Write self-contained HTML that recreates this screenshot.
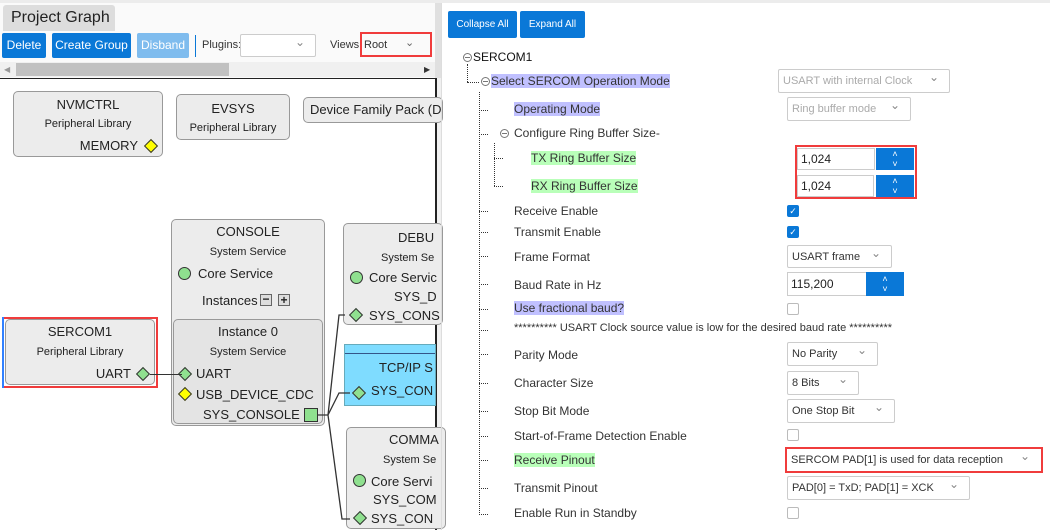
<!DOCTYPE html>
<html><head><meta charset="utf-8"><style>
*{margin:0;padding:0;box-sizing:border-box}
body{width:1050px;height:530px;overflow:hidden;background:#fff;font-family:"Liberation Sans",sans-serif;position:relative;color:#222}
.a{position:absolute}
.btn{position:absolute;background:#0a78d7;color:#fff;font-size:12px;text-align:center;border-radius:2px}
.node{position:absolute;background:#ececec;border:1px solid #999;border-radius:5px;font-size:13px;text-align:center}
.sub{font-size:11px}
.dia{position:absolute;width:10px;height:10px;transform:rotate(45deg);border:1px solid #333}
.circ{position:absolute;width:13px;height:13px;border-radius:50%;background:#8fe08f;border:1px solid #333}
.lbl{position:absolute;font-size:12px;color:#333;white-space:nowrap}
.sel{position:absolute;border:1px solid #ccc;border-radius:2px;font-size:11px;color:#333;padding:5px 0 0 4px;background:#fff;white-space:nowrap}
.sel:after{content:"⌄";position:absolute;right:10px;top:0px;color:#888;font-size:12px}
.dis{color:#aaa}
.vd{position:absolute;border-left:1px dotted #333;width:0}
.hd{position:absolute;border-top:1px dotted #333;height:0;width:9px}
.cb{position:absolute;width:12px;height:12px;border:1px solid #bbb;border-radius:2px;background:#fff}
.cbc{background:#0a78d7;border-color:#0a78d7;color:#fff;font-size:9px;line-height:11px;text-align:center}
.spin{position:absolute;background:#0a78d7;color:#fff;font-size:9px;text-align:center;line-height:10px;padding-top:1px}
.hp{background:#c0c0ff}.hg{background:#b9ffb9}
.red{position:absolute;border:2px solid #f03c3c}
.mc{position:absolute;width:9px;height:9px;border:1px solid #777;border-radius:50%}
.mc:after{content:"";position:absolute;left:1px;top:3px;width:5px;height:1px;background:#777}
</style></head><body>
<div class="a" style="left:0;top:0;width:1050px;height:3px;background:#ececec"></div>
<div class="a" style="left:0;top:3px;width:435px;height:75px;background:#fafafa"></div>
<div class="a" style="left:3px;top:5px;width:112px;height:26px;background:#ddd;border-radius:3px 3px 0 0;font-size:16px;padding:4px 0 0 8px;color:#222">Project Graph</div>
<div class="btn" style="left:2px;top:33px;width:44px;height:25px;line-height:25px">Delete</div>
<div class="btn" style="left:52px;top:33px;width:79px;height:25px;line-height:25px">Create Group</div>
<div class="btn" style="left:137px;top:33px;width:52px;height:25px;line-height:25px;background:#7fbcee">Disband</div>
<div class="a" style="left:195px;top:35px;width:1px;height:22px;background:#0a78d7"></div>
<div class="lbl" style="left:202px;top:39px;font-size:11px">Plugins:</div>
<div class="sel" style="left:240px;top:34px;width:76px;height:23px"></div>
<div class="lbl" style="left:330px;top:39px;font-size:11px">Views:</div>
<div class="lbl" style="left:364px;top:39px;font-size:11px">Root</div>
<div class="a" style="left:405px;top:36px;font-size:11px;color:#666">⌄</div>
<div class="red" style="left:360px;top:32px;width:72px;height:25px"></div>
<div class="a" style="left:0;top:62px;width:435px;height:15px;background:#f0f0f0"></div>
<div class="a" style="left:16px;top:63px;width:213px;height:13px;background:#c1c1c1"></div>
<div class="a" style="left:4px;top:65px;font-size:8px;color:#999">◀</div>
<div class="a" style="left:424px;top:65px;font-size:8px;color:#333">▶</div>
<div class="a" style="left:0;top:78px;width:436px;height:1px;background:#222"></div>
<div class="a" style="left:435px;top:78px;width:2px;height:452px;background:#222"></div>
<div class="a" style="left:435px;top:3px;width:6px;height:75px;background:#e0e0e0"></div>
<div class="a" style="left:437px;top:78px;width:4px;height:452px;background:#f0f0f0"></div>

<div class="node" style="left:13px;top:91px;width:150px;height:66px"><div style="margin-top:5px">NVMCTRL</div><div class="sub" style="margin-top:6px">Peripheral Library</div><div style="position:absolute;right:24px;top:46px">MEMORY</div></div>
<div class="dia" style="left:146px;top:141px;background:#ffff00"></div>
<div class="node" style="left:176px;top:94px;width:114px;height:46px"><div style="margin-top:6px">EVSYS</div><div class="sub" style="margin-top:6px">Peripheral Library</div></div>
<div class="node" style="left:303px;top:97px;width:140px;height:26px;text-align:left;padding:4px 0 0 6px">Device Family Pack (D</div>

<div class="node" style="left:171px;top:219px;width:154px;height:207px"><div style="margin-top:4px">CONSOLE</div><div class="sub" style="margin-top:7px">System Service</div><div style="position:absolute;left:26px;top:46px">Core Service</div><div style="position:absolute;left:30px;top:73px">Instances</div></div>
<div class="circ" style="left:178px;top:267px"></div>
<div class="a" style="left:260px;top:294px;width:12px;height:12px;background:#ddd;border:1px solid #666;font-size:12px;line-height:9px;text-align:center;font-weight:bold">−</div>
<div class="a" style="left:278px;top:294px;width:12px;height:12px;background:#ddd;border:1px solid #666;font-size:12px;line-height:10px;text-align:center;font-weight:bold">+</div>
<div class="node" style="left:173px;top:319px;width:150px;height:105px;background:#e4e4e4"><div style="margin-top:4px">Instance 0</div><div class="sub" style="margin-top:7px">System Service</div><div style="position:absolute;left:22px;top:46px">UART</div><div style="position:absolute;left:22px;top:67px">USB_DEVICE_CDC</div><div style="position:absolute;left:29px;top:87px">SYS_CONSOLE</div></div>
<div class="dia" style="left:180px;top:369px;background:#8fe08f"></div>
<div class="dia" style="left:180px;top:389px;background:#ffff00"></div>
<div class="a" style="left:304px;top:408px;width:14px;height:14px;background:#8fe08f;border:1px solid #333"></div>

<div class="node" style="left:5px;top:319px;width:150px;height:66px"><div style="margin-top:4px">SERCOM1</div><div class="sub" style="margin-top:7px">Peripheral Library</div><div style="position:absolute;right:23px;top:46px">UART</div></div>
<div class="dia" style="left:138px;top:369px;background:#8fe08f"></div>
<div class="red" style="left:2px;top:317px;width:156px;height:71px"></div>
<div class="a" style="left:2px;top:317px;width:2px;height:71px;background:#3080ff"></div>
<div class="a" style="left:150px;top:374px;width:32px;height:1px;background:#333"></div>

<div class="node" style="left:343px;top:223px;width:100px;height:102px;text-align:left"><div style="margin:6px 0 0 54px">DEBU</div><div class="sub" style="margin:7px 0 0 37px">System Se</div><div style="position:absolute;left:25px;top:46px">Core Servic</div><div style="position:absolute;left:50px;top:65px">SYS_D</div><div style="position:absolute;left:25px;top:84px">SYS_CONS</div></div>
<div class="circ" style="left:350px;top:271px"></div>
<div class="dia" style="left:351px;top:310px;background:#8fe08f"></div>
<div class="a" style="left:344px;top:344px;width:92px;height:62px;background:#7fdcff;border:1px solid #6ab;font-size:13px"><div style="border-bottom:1px solid #358;height:9px"></div><div style="margin:6px 0 0 34px">TCP/IP S</div><div style="position:absolute;left:26px;top:38px">SYS_CON</div></div>
<div class="dia" style="left:354px;top:388px;background:#8fe08f"></div>
<div class="node" style="left:346px;top:427px;width:100px;height:102px;text-align:left"><div style="margin:4px 0 0 42px">COMMA</div><div class="sub" style="margin:7px 0 0 36px">System Se</div><div style="position:absolute;left:24px;top:46px">Core Servi</div><div style="position:absolute;left:26px;top:64px">SYS_COM</div><div style="position:absolute;left:24px;top:83px">SYS_CON</div></div>
<div class="circ" style="left:353px;top:474px"></div>
<div class="dia" style="left:355px;top:513px;background:#8fe08f"></div>
<svg class="a" style="left:0;top:0" width="435" height="530"><path d="M318 415 H328 L339 315 H345 M328 415 L339 393 H350 M328 415 L342 519 H350" fill="none" stroke="#333" stroke-width="1.3"/></svg>

<!-- right panel -->
<div class="a" style="left:441px;top:3px;width:1px;height:527px;background:#ddd"></div>
<div class="btn" style="left:448px;top:11px;width:69px;height:27px;line-height:27px;font-size:10px">Collapse All</div>
<div class="btn" style="left:520px;top:11px;width:65px;height:27px;line-height:27px;font-size:10px">Expand All</div>

<div class="mc" style="left:463px;top:53px"></div><div class="lbl" style="left:473px;top:50px;color:#111">SERCOM1</div>
<div class="vd" style="left:467px;top:64px;height:18px"></div><div class="hd" style="left:467px;top:82px;width:12px"></div>
<div class="mc" style="left:481px;top:77px"></div><div class="lbl hp" style="left:491px;top:74px">Select SERCOM Operation Mode</div>
<div class="sel dis" style="left:778px;top:69px;width:172px;height:24px">USART with internal Clock</div>
<div class="vd" style="left:479px;top:92px;height:423px"></div>
<div class="lbl hp" style="left:514px;top:102px">Operating Mode</div><div class="sel dis" style="left:787px;top:97px;width:124px;height:24px">Ring buffer mode</div>
<div class="mc" style="left:500px;top:129px"></div><div class="lbl" style="left:514px;top:126px">Configure Ring Buffer Size-</div>
<div class="vd" style="left:494px;top:143px;height:43px"></div>
<div class="hd" style="left:494px;top:158px"></div><div class="hd" style="left:494px;top:186px"></div>
<div class="lbl hg" style="left:531px;top:151px">TX Ring Buffer Size</div>
<div class="lbl hg" style="left:531px;top:179px">RX Ring Buffer Size</div>
<div class="a" style="left:797px;top:148px;width:78px;height:22px;border:1px solid #ccc;font-size:12px;padding:3px 0 0 3px">1,024</div><div class="spin" style="left:876px;top:148px;width:38px;height:22px">˄<br>˅</div>
<div class="a" style="left:797px;top:175px;width:77px;height:22px;border:1px solid #ccc;font-size:12px;padding:3px 0 0 3px">1,024</div><div class="spin" style="left:876px;top:175px;width:38px;height:22px">˄<br>˅</div>
<div class="red" style="left:795px;top:145px;width:122px;height:54px"></div>

<div class="lbl" style="left:514px;top:204px">Receive Enable</div><div class="cb cbc" style="left:787px;top:205px">✓</div>
<div class="lbl" style="left:514px;top:225px">Transmit Enable</div><div class="cb cbc" style="left:787px;top:226px">✓</div>
<div class="lbl" style="left:514px;top:250px">Frame Format</div><div class="sel" style="left:787px;top:245px;width:105px;height:23px">USART frame</div>
<div class="lbl" style="left:514px;top:278px">Baud Rate in Hz</div>
<div class="a" style="left:787px;top:272px;width:80px;height:24px;border:1px solid #ccc;font-size:12px;padding:4px 0 0 3px">115,200</div><div class="spin" style="left:866px;top:272px;width:38px;height:24px;padding-top:2px">˄<br>˅</div>
<div class="lbl hp" style="left:514px;top:301px">Use fractional baud?</div><div class="cb" style="left:787px;top:303px"></div>
<div class="lbl" style="left:514px;top:322px;font-size:11px">********** USART Clock source value is low for the desired baud rate **********</div>
<div class="lbl" style="left:514px;top:348px">Parity Mode</div><div class="sel" style="left:787px;top:342px;width:91px;height:24px">No Parity</div>
<div class="lbl" style="left:514px;top:376px">Character Size</div><div class="sel" style="left:787px;top:371px;width:72px;height:24px">8 Bits</div>
<div class="lbl" style="left:514px;top:404px">Stop Bit Mode</div><div class="sel" style="left:787px;top:399px;width:108px;height:24px">One Stop Bit</div>
<div class="lbl" style="left:514px;top:429px">Start-of-Frame Detection Enable</div><div class="cb" style="left:787px;top:429px"></div>
<div class="lbl hg" style="left:514px;top:453px">Receive Pinout</div><div class="sel" style="left:787px;top:449px;width:253px;height:23px;border:none">SERCOM PAD[1] is used for data reception</div>
<div class="red" style="left:785px;top:447px;width:258px;height:26px"></div>
<div class="lbl" style="left:514px;top:481px">Transmit Pinout</div><div class="sel" style="left:787px;top:476px;width:183px;height:24px">PAD[0] = TxD; PAD[1] = XCK</div>
<div class="lbl" style="left:514px;top:506px">Enable Run in Standby</div><div class="cb" style="left:787px;top:507px"></div>
<div class="hd" style="left:479px;top:110px"></div><div class="hd" style="left:479px;top:134px"></div>
<div class="hd" style="left:479px;top:211px"></div><div class="hd" style="left:479px;top:232px"></div><div class="hd" style="left:479px;top:256px"></div><div class="hd" style="left:479px;top:284px"></div><div class="hd" style="left:479px;top:309px"></div><div class="hd" style="left:479px;top:330px"></div><div class="hd" style="left:479px;top:354px"></div><div class="hd" style="left:479px;top:383px"></div><div class="hd" style="left:479px;top:411px"></div><div class="hd" style="left:479px;top:436px"></div><div class="hd" style="left:479px;top:460px"></div><div class="hd" style="left:479px;top:488px"></div><div class="hd" style="left:479px;top:514px"></div>
</body></html>
